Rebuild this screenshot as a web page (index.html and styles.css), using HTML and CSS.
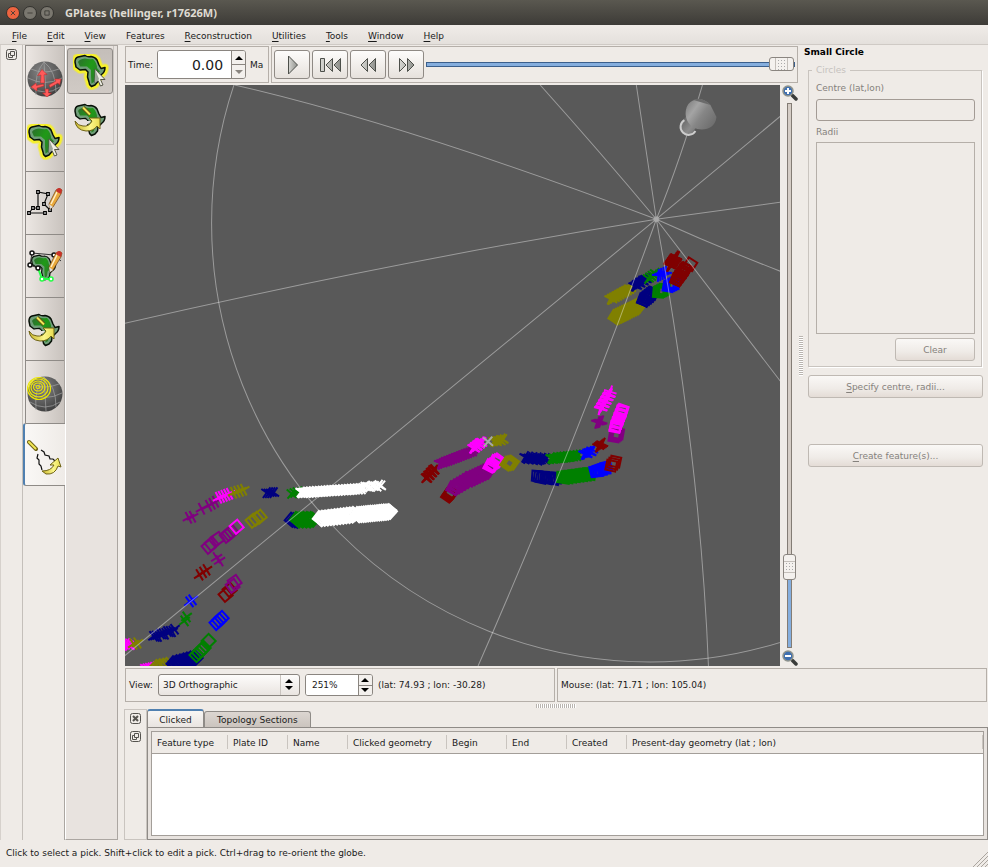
FILE: index.html
```html
<!DOCTYPE html>
<html lang="en">
<head>
<meta charset="utf-8">
<title>GPlates (hellinger, r17626M)</title>
<link rel="stylesheet" href="styles.css">
</head>
<body>
<svg class="defs" width="0" height="0" aria-hidden="true">
  <defs>
    <linearGradient id="leaf" x1="0" y1="0" x2="1" y2=".6"><stop offset="0" stop-color="#2c6e2e"/><stop offset=".55" stop-color="#1f9a17"/><stop offset="1" stop-color="#2c7a2c"/></linearGradient>
    <linearGradient id="gold" x1="0" y1="0" x2="1" y2="0"><stop offset="0" stop-color="#c9b52c"/><stop offset=".6" stop-color="#fbf68a"/><stop offset="1" stop-color="#e8dc50"/></linearGradient>
    <radialGradient id="ball" cx=".4" cy=".3" r=".75"><stop offset="0" stop-color="#858585"/><stop offset=".6" stop-color="#5c5c5c"/><stop offset="1" stop-color="#3c3c3c"/></radialGradient>
    <linearGradient id="arrowfill" x1="0" y1="0" x2="1" y2="0"><stop offset="0" stop-color="#d8d8d4"/><stop offset="1" stop-color="#8e908c"/></linearGradient>
    <linearGradient id="conefill" x1="0" y1="0" x2="1" y2=".7"><stop offset="0" stop-color="#777"/><stop offset=".35" stop-color="#a4a4a4"/><stop offset=".6" stop-color="#868686"/><stop offset="1" stop-color="#6e6e6e"/></linearGradient>
    <linearGradient id="stemfill" x1="0" y1="0" x2="1" y2="1"><stop offset="0" stop-color="#555"/><stop offset=".6" stop-color="#8c8c8c"/><stop offset="1" stop-color="#666"/></linearGradient>
    <path id="africa" d="M2 8Q2 4 5 3L12 1.500Q15 3.500 18 2.500Q22 3 24 6L26 11 28 14.500 32 13.500Q32 18 28.500 20.500L25 24 24.500 28 22 31 18.500 32.500Q16 31 16 28L14.500 23 15 18 12.500 15.500 7 16 3 13Z"/>
    <g id="land"><use href="#africa" fill="#6f9e78" stroke="#071007" stroke-width="1.500" stroke-linejoin="round"/><path d="M5 8Q6 5 12 4.500Q16 5.500 20 5Q24 9 24 14L27 17.500 22 22 21 28 18.500 29.500 18 22 18 16 14 12.500 7 12.500Z" fill="url(#leaf)"/></g>
    <g id="cursor"><path d="M22 15V29L25 26.500 27.500 32 30 31 27.500 25.500H32Z" fill="#efefe4" stroke="#555548" stroke-width="1"/><path d="M22 15V29L25 26.500 26 25Z" fill="#9ea79a"/></g>
    <g id="goldarrow"><path d="M2 18Q3 27 13 28Q21 28 24 23L27 26 27 15 16 15 19 18Q16 24 10 23Q5 23 2 18Z" fill="url(#gold)" stroke="#6e6214" stroke-width="1"/></g>
    <symbol id="i-pick" viewBox="0 0 36 36"><use href="#africa" fill="none" stroke="#f6f02c" stroke-opacity=".5" stroke-width="8" stroke-linejoin="round"/><use href="#africa" fill="none" stroke="#f6f02c" stroke-width="6" stroke-linejoin="round"/><use href="#land"/><use href="#cursor"/></symbol>
    <symbol id="i-rotate" viewBox="0 0 36 36"><use href="#land"/><path d="M10 4.500 17 11.500" stroke="#5f5714" stroke-width="4"/><path d="M10 4.500 17 11.500" stroke="#f2e756" stroke-width="2"/><path d="M6 17Q14 15 14 18L18 18Q15 23 9 22Z" fill="#e6e1dc"/><use href="#goldarrow"/></symbol>
    <symbol id="i-globe" viewBox="0 0 36 36"><circle cx="18" cy="18" r="17.500" fill="url(#ball)"/><g fill="none" stroke="#a3a3a3" stroke-width=".7"><path d="M17 1Q7 12 9 34M17 1Q18 18 19 35M17 1Q29 10 29 31M4 8Q17 14 32 8M1 17Q18 26 35 17M3 26Q18 36 33 26"/></g></symbol>
    <symbol id="i-drag" viewBox="0 0 36 36"><use href="#i-globe"/><g fill="#ff5a5a" stroke="#b22" stroke-width=".5"><path d="M13.500 22 14 14 10.500 14.500 15 8.500 20 13.500 17 13.800 17.500 22ZM17 25 10 27 10 30 4 26 9 22 9.500 24.500 16.500 23ZM22 24 29 20 27.500 18 34 18 32.500 24 31 22 23 26.500ZM18 28H21.500V32L24.500 32 20 36 15.500 32H18.500Z"/></g></symbol>
    <g id="pencil"><path d="M22 17 29 3Q33 0 35 3L34 7 26 20 23 22Z" fill="#e9a93c" stroke="#6b3f16" stroke-width=".7"/><path d="M24 17 30 5" stroke="#fff0c8" stroke-width="1.500"/><path d="M29 3Q32 -1 35 3L34 7 30 5Z" fill="#c9312b"/><path d="M22 17 23 22 26 20Z" fill="#ddd"/></g>
    <symbol id="i-digitise" viewBox="0 0 36 36"><path d="M2 26H18M2 26 6 21H11V5L21 7 17 17 23 23" fill="none" stroke="#111" stroke-width="1.200"/><g fill="#fff" stroke="#000" stroke-width="1.200"><path d="M.7 24.700h2.600v2.600h-2.600zM16.700 24.700h2.600v2.600h-2.600zM4.700 19.700h2.600v2.600h-2.600zM9.700 19.700h2.600v2.600h-2.600zM9.700 3.700h2.600v2.600h-2.600zM19.700 5.700h2.600v2.600h-2.600zM15.700 15.700h2.600v2.600h-2.600zM21.700 21.700h2.600v2.600h-2.600z"/></g><use href="#pencil"/></symbol>
    <symbol id="i-topo" viewBox="0 0 36 36"><g transform="translate(3 4) scale(.8)"><use href="#land"/></g><path d="M3 15 5 3 27 5 34 11M3 15 11 18" fill="none" stroke="#333"/><path d="M11 18 15 29H24" fill="none" stroke="#2f4" stroke-width="2"/><g fill="#fff" stroke="#111" stroke-width="1.500"><circle cx="5" cy="3" r="2"/><circle cx="27" cy="5" r="2"/><circle cx="3" cy="15" r="2"/><circle cx="11" cy="18" r="2"/></g><g fill="#fff" stroke="#2f4" stroke-width="1.500"><circle cx="15" cy="29" r="2"/><circle cx="24" cy="29" r="2"/></g><use href="#pencil"/></symbol>
    <symbol id="i-circles" viewBox="0 0 36 36"><use href="#i-globe"/><g fill="none" stroke="#ebe600" stroke-width="1.200"><ellipse cx="11" cy="11" rx="2" ry="1.500"/><ellipse cx="11" cy="11" rx="4.500" ry="4"/><ellipse cx="11" cy="11.500" rx="7" ry="6.500"/><ellipse cx="11.500" cy="12" rx="9.500" ry="9"/><ellipse cx="12" cy="12.500" rx="11.500" ry="11"/></g></symbol>
    <symbol id="i-hellinger" viewBox="0 0 36 36"><path d="M2 3 9 10" stroke="#6e6214" stroke-width="4" stroke-linecap="round"/><path d="M2 3 8.500 9.500" stroke="#f2e756" stroke-width="2" stroke-linecap="round"/><path d="M14 11 17 13 18 16 22 17 23 20 26 20 28 22M11 15 10 19 12 21 12 25 14 27 15 31" fill="none" stroke="#111" stroke-width="1.200"/><path d="M15 32Q24 32 27 26H23L31 19 34 28 31 27Q28 36 19 35Z" fill="url(#gold)" stroke="#6e6214"/></symbol>
    <symbol id="i-float" viewBox="0 0 11 11"><rect x=".5" y=".5" width="10" height="10" rx="2" fill="none" stroke="#55534f"/><path d="M4.500 2.500h4v4h-4zM6.500 6.500v2h-4v-4h2" fill="none" stroke="#55534f"/></symbol>
    <symbol id="i-close" viewBox="0 0 11 11"><rect x=".5" y=".5" width="10" height="10" rx="2" fill="none" stroke="#55534f"/><path d="M3 3 8 8M8 3 3 8" stroke="#55534f" stroke-width="2"/></symbol>
    <g id="lens"><path d="M10.500 10.500 14 14" stroke="#3a3c3a" stroke-width="3.500" stroke-linecap="round"/><circle cx="6" cy="6" r="5" fill="#3f6fb0" stroke="#8f938c" stroke-width="1.500"/></g>
    <symbol id="i-zoomin" viewBox="0 0 16 16"><use href="#lens"/><path d="M3 6H9M6 3V9" stroke="#fff" stroke-width="2"/></symbol>
    <symbol id="i-zoomout" viewBox="0 0 16 16"><use href="#lens"/><path d="M3 6H9" stroke="#fff" stroke-width="2"/></symbol>
  </defs>
</svg>

<header class="titlebar">
  <button class="wbtn wclose" aria-label="Close"><svg viewBox="0 0 14 14"><path d="M4.500 4.500 9.500 9.500M9.500 4.500 4.500 9.500"/></svg></button>
  <button class="wbtn" aria-label="Minimise"><svg viewBox="0 0 14 14"><path d="M4 7H10"/></svg></button>
  <button class="wbtn" aria-label="Maximise"><svg viewBox="0 0 14 14"><path d="M4.500 4.500h5v5h-5z"/></svg></button>
  <h1>GPlates (hellinger, r17626M)</h1>
</header>
<nav class="menubar">
  <a href="#"><u>F</u>ile</a><a href="#"><u>E</u>dit</a><a href="#"><u>V</u>iew</a><a href="#">Fe<u>a</u>tures</a><a href="#"><u>R</u>econstruction</a><a href="#"><u>U</u>tilities</a><a href="#"><u>T</u>ools</a><a href="#"><u>W</u>indow</a><a href="#"><u>H</u>elp</a>
</nav>

<div class="window">
  <aside class="side">
    <div class="gutter"><button class="dockbtn" aria-label="Float"><svg><use href="#i-float"/></svg></button></div>
    <div class="vtabs">
      <button class="vtab" aria-label="View"><svg><use href="#i-drag"/></svg></button>
      <button class="vtab" aria-label="Feature inspection"><svg><use href="#i-pick"/></svg></button>
      <button class="vtab" aria-label="Digitisation"><svg><use href="#i-digitise"/></svg></button>
      <button class="vtab" aria-label="Topology"><svg><use href="#i-topo"/></svg></button>
      <button class="vtab" aria-label="Pole manipulation"><svg><use href="#i-rotate"/></svg></button>
      <button class="vtab" aria-label="Small circle"><svg><use href="#i-circles"/></svg></button>
      <button class="vtab current" aria-label="Hellinger"><svg><use href="#i-hellinger"/></svg></button>
    </div>
    <div class="toolpage">
      <div class="toolset">
        <button class="tool pressed" aria-label="Select pick"><svg><use href="#i-pick"/></svg></button>
        <button class="tool" aria-label="Adjust pole"><svg><use href="#i-rotate"/></svg></button>
      </div>
    </div>
  </aside>

  <main class="content">
    <div class="upper">
      <div class="view">
        <div class="timebar">
          <div class="frame timebox">
            <label for="time">Time:</label>
            <span class="spin big"><input id="time" type="text" value="0.00"><span class="steps"><button aria-label="Increase time"><svg viewBox="0 0 8 4"><path d="M0 4 4 0 8 4Z"/></svg></button><button aria-label="Decrease time" disabled><svg viewBox="0 0 8 4"><path d="M0 0H8L4 4Z"/></svg></button></span></span>
            <span>Ma</span>
          </div>
          <div class="frame playbox">
            <button class="play" aria-label="Play"><svg viewBox="0 0 24 20"><path d="M8.500 1V19L17.500 10Z"/></svg></button>
            <button class="play" aria-label="Reset"><svg viewBox="0 0 24 20"><path d="M2.500 3.500h4v13h-4zM14.500 3.500V16.500L8 10ZM22.500 3.500V16.500L16 10Z"/></svg></button>
            <button class="play" aria-label="Step back"><svg viewBox="0 0 24 20"><path d="M11.500 3.500V16.500L5 10ZM19.500 3.500V16.500L13 10Z"/></svg></button>
            <button class="play" aria-label="Step forward"><svg viewBox="0 0 24 20"><path d="M5.500 3.500V16.500L12 10ZM13.500 3.500V16.500L20 10Z"/></svg></button>
            <input class="hslider" type="range" min="0" max="100" value="100" aria-label="Time slider">
          </div>
        </div>
        <div class="stage">
          <svg class="globe" viewBox="125 85 655 580" preserveAspectRatio="xMidYMid slice" role="img" aria-label="Globe">
            <g id="picks"></g>
            <g class="grid">
              <circle cx="650" cy="223" r="438"/>
              <path d="M235 85Q408 125 656 219M540 85Q600 152 656 219M636 85 656 219M702 85Q680 160 656 219M780 116 656 219M780 202 656 219M780 271Q718 247 656 219M780 381Q716 297 656 219M708 665Q700 462 656 219M478 665Q573 449 656 219M125 655 656 219M125 323Q399 260 656 219"/>
            </g>
            <circle cx="656" cy="219" r="3" fill="#b0b0b0" opacity=".6"/>
            <path d="M680 124 688 113 699 123 690 135 683 133Z" fill="url(#stemfill)"/>
            <path d="M684 120A8 8 0 1 0 695 131" fill="none" stroke="#ccc" stroke-width="2"/>
            <path d="M710 105C703 97 693 98 688 104C682 113 686 126 697 129C706 131 715 127 716 117Z" fill="url(#conefill)"/>
            <path d="M710 105C703 98 697 98 693 100Z" fill="#6a6a6a"/>
          </svg>
          <div class="zoomcol">
            <button class="zoombtn" aria-label="Zoom in"><svg><use href="#i-zoomin"/></svg></button>
            <input class="vslider" type="range" min="0" max="100" value="13" aria-label="Zoom">
            <button class="zoombtn" aria-label="Zoom out"><svg><use href="#i-zoomout"/></svg></button>
          </div>
        </div>
      </div>
      <div class="vgrip"></div>
      <section class="panel">
        <h2>Small Circle</h2>
        <fieldset disabled>
          <legend>Circles</legend>
          <label for="centre">Centre (lat,lon)</label>
          <input id="centre" class="field" type="text">
          <label for="radii">Radii</label>
          <textarea id="radii" class="list"></textarea>
          <button class="btn clear">Clear</button>
        </fieldset>
        <button class="btn" disabled><span><u>S</u>pecify centre, radii...</span></button>
        <button class="btn create" disabled><span><u>C</u>reate feature(s)...</span></button>
      </section>
    </div>

    <div class="viewbar">
      <div class="frame viewbox">
        <label for="projection">View:</label>
        <span class="combo"><select id="projection"><option>3D Orthographic</option></select><svg viewBox="0 0 8 11"><path d="M0 4 4 0 8 4ZM0 7H8L4 11Z"/></svg></span>
        <span class="spin"><input type="text" value="251%" aria-label="Zoom percent"><span class="steps"><button aria-label="Increase zoom"><svg viewBox="0 0 8 4"><path d="M0 4 4 0 8 4Z"/></svg></button><button aria-label="Decrease zoom"><svg viewBox="0 0 8 4"><path d="M0 0H8L4 4Z"/></svg></button></span></span>
        <span>(lat: 74.93 ; lon: -30.28)</span>
      </div>
      <div class="frame mousebox">Mouse: (lat: 71.71 ; lon: 105.04)</div>
    </div>
    <div class="hgrip"></div>
    <section class="dock">
      <div class="dockside">
        <button class="dockbtn" aria-label="Close"><svg><use href="#i-close"/></svg></button>
        <button class="dockbtn" aria-label="Float"><svg><use href="#i-float"/></svg></button>
      </div>
      <div class="tabbox">
        <div class="tabs"><button class="tab current">Clicked</button><button class="tab">Topology Sections</button></div>
        <div class="tabpage">
          <div class="tableframe">
            <table>
              <thead><tr><th class="c1">Feature type</th><th class="c2">Plate ID</th><th class="c2">Name</th><th class="c3">Clicked geometry</th><th class="c2">Begin</th><th class="c2">End</th><th class="c2">Created</th><th>Present-day geometry (lat ; lon)</th></tr></thead>
            </table>
          </div>
        </div>
      </div>
    </section>
  </main>
</div>
<footer class="status"><span>Click to select a pick. Shift+click to edit a pick. Ctrl+drag to re-orient the globe.</span><svg viewBox="0 0 16 16"><path d="M1 16 16 1M5 16 16 5M9 16 16 9M13 16 16 13"/></svg></footer>
<script src="picks.js"></script>
</body>
</html>
```
FILE: picks.js
```js
// Each row: shape, colour, first pick, last pick, number of picks, rotation.
const DR = "#800000", PU = "#800080", MG = "#ff00ff", OL = "#808000",
      NV = "#000080", GR = "#008000", BL = "#0000ff", WH = "#ffffff", GY = "#a8a8a8";
const rows = [
  // western segment
  ["x", PU, 189, 517, 193, 516, 2, -28], ["x", PU, 202, 508, 202, 508, 1, -28],
  ["x", PU, 209, 505, 216, 501, 3, -28], ["x", MG, 219, 497, 230, 493, 5, -28],
  ["x", OL, 234, 492, 244, 489, 4, -28], ["x", NV, 267, 492, 274, 492, 4, 35],
  ["x", GR, 292, 493, 298, 491, 3, 40], ["x", WH, 301, 492, 362, 488, 64, 40],
  ["x", WH, 366, 486, 381, 485, 8, 40],
  ["s", PU, 209, 546, 212, 543, 2, 50], ["s", PU, 218, 538, 218, 538, 1, 55],
  ["s", PU, 227, 535, 232, 531, 3, 50], ["s", MG, 237, 526, 237, 526, 1, 50],
  ["s", OL, 253, 520, 260, 516, 3, 50], ["s", NV, 292, 519, 297, 520, 3, 40],
  ["s", GR, 297, 519, 313, 519, 14, 42], ["s", WH, 320, 518, 354, 514, 34, 42],
  ["s", WH, 358, 514, 390, 511, 44, 42],
  ["x", PU, 217, 557, 220, 560, 2, -32], ["x", DR, 200, 574, 207, 569, 3, -32],
  ["x", BL, 190, 601, 193, 599, 2, -36], ["x", GR, 185, 620, 187, 616, 2, -36],
  ["x", NV, 154, 636, 175, 629, 10, -34], ["x", MG, 122, 643, 130, 644, 6, 35],
  ["x", OL, 134, 643, 138, 642, 2, -34], ["x", MG, 146, 667, 151, 666, 3, 35],
  ["s", DR, 226, 594, 230, 589, 2, 50], ["s", PU, 233, 585, 235, 581, 2, 55],
  ["s", BL, 217, 622, 222, 617, 3, 48], ["s", OL, 157, 666, 167, 664, 4, 45],
  ["s", NV, 174, 663, 196, 657, 20, 45], ["s", GR, 197, 654, 204, 647, 4, 45],
  ["s", GR, 209, 640, 209, 640, 1, 45],
  // middle segment
  ["x", DR, 426, 478, 435, 468, 12, 45], ["x", PU, 440, 463, 472, 451, 40, 25],
  ["x", MG, 473, 448, 482, 441, 12, 35], ["x", OL, 494, 441, 503, 439, 8, 35],
  ["x", GY, 488, 441, 488, 441, 1, 40],
  ["s", DR, 448, 495, 452, 491, 5, 35], ["s", PU, 453, 488, 468, 479, 16, 32],
  ["s", PU, 469, 479, 488, 470, 22, 32], ["s", MG, 490, 466, 498, 459, 6, 32],
  ["s", OL, 507, 463, 512, 462, 4, 35],
  ["x", NV, 525, 457, 546, 459, 16, 35], ["x", GR, 551, 458, 578, 455, 26, 35],
  ["x", BL, 584, 454, 592, 450, 7, 30], ["x", DR, 598, 446, 602, 443, 4, 25],
  ["s", NV, 537, 476, 556, 478, 10, 8], ["s", GR, 562, 477, 590, 473, 24, 5],
  ["s", BL, 595, 471, 606, 467, 10, -10], ["s", DR, 611, 465, 615, 461, 3, 12],
  ["x", PU, 597, 422, 601, 421, 4, 20], ["x", MG, 600, 409, 610, 392, 16, 20],
  ["s", PU, 614, 436, 618, 433, 4, 10], ["s", MG, 615, 427, 622, 409, 15, 15],
  // northern segment
  ["x", OL, 610, 299, 630, 288, 26, 30], ["x", NV, 634, 286, 646, 278, 12, 30],
  ["x", GR, 648, 278, 655, 273, 4, 35], ["x", BL, 658, 275, 665, 272, 4, 5],
  ["x", DR, 669, 266, 676, 256, 18, 25],
  ["s", OL, 615, 317, 638, 306, 34, 35], ["s", NV, 643, 300, 652, 293, 14, 25],
  ["s", GR, 658, 292, 664, 289, 5, 5], ["s", BL, 668, 286, 674, 283, 4, 10],
  ["s", DR, 676, 280, 685, 268, 18, 25], ["s", DR, 690, 264, 690, 264, 1, 32]
];
const shapes = { s: "M-5-5H5V5H-5Z", x: "M-6.5 0H6.5M0-6.5V6.5" };
const layer = document.getElementById("picks");
for (const [kind, colour, x0, y0, x1, y1, n, turn] of rows) {
  for (let i = 0; i < n; i++) {
    const t = n > 1 ? i / (n - 1) : 0;
    const wobble = n > 5 ? (i % 3) - 1 : 0;
    const mark = document.createElementNS("http://www.w3.org/2000/svg", "path");
    mark.setAttribute("d", shapes[kind]);
    mark.setAttribute("stroke", colour);
    mark.setAttribute("transform", `translate(${x0 + (x1 - x0) * t} ${y0 + (y1 - y0) * t + wobble * 0.7}) rotate(${turn + wobble * 4})`);
    layer.append(mark);
  }
}
```
FILE: styles.css
```css
* { box-sizing: border-box; }
body {
  margin: 0;
  min-height: 100vh;
  display: flex;
  flex-direction: column;
  background: #efebe7;
  color: #1a1a1a;
  font: 9px/12px "DejaVu Sans", sans-serif;
}
button, input, select, textarea { font: inherit; color: inherit; margin: 0; }
button { padding: 0; border: 0; background: none; }
svg { display: block; }
.defs { position: absolute; }
u { text-decoration: underline; text-underline-offset: 2px; }

.titlebar {
  display: flex;
  align-items: center;
  gap: 3px;
  height: 25px;
  padding-left: 6px;
  background: linear-gradient(#5a5850, #3d3b37);
}
.titlebar h1 {
  margin: 0 0 0 8px;
  font: bold 11px/16px "Noto Sans", sans-serif;
  color: #dfdbd2;
}
.wbtn {
  width: 14px;
  height: 14px;
  border-radius: 50%;
  background: #7a776f;
  border: 1px solid #33322e;
}
.wbtn svg { fill: none; stroke: #3a3935; stroke-width: 1; }
.wclose { background: #ee6440; }

.menubar {
  display: flex;
  gap: 20px;
  height: 20px;
  padding: 5px 12px 0;
  background: linear-gradient(#f0ece8, #e4e0dc);
  border-bottom: 1px solid #cfcac5;
}
.menubar a { color: inherit; text-decoration: none; }

.window { flex: 1; display: flex; }
.side { display: flex; width: 118px; }
.gutter {
  width: 23px;
  padding: 4px 0 0 5px;
  border-left: 1px solid #d6d1cc;
  border-right: 1px solid #c4bfba;
}
.dockbtn { display: block; width: 11px; height: 11px; }
.dockbtn svg { width: 11px; height: 11px; }
.vtabs { width: 42px; display: flex; flex-direction: column; border-right: 1px solid #aba6a1; }
.vtab {
  height: 63px;
  margin: 0 0 0 2px;
  padding: 4px 0 0 1px;
  border: 1px solid #8f8b87;
  border-width: 1px 0 0 1px;
  background: linear-gradient(90deg, #ece7e3, #c9c3be);
}
.vtab svg { width: 36px; height: 36px; }
.vtab.current {
  margin: 0 -1px 0 0;
  padding-left: 2px;
  border-left: 2px solid #5080b0;
  border-bottom: 1px solid #8f8b87;
  border-radius: 3px 0 0 3px;
  background: linear-gradient(90deg, #faf8f6, #efebe7);
}
.toolpage { width: 53px; background: #e8e3df; border: 1px solid #aba6a1; border-left: 1px solid #fff; }
.toolset { width: 48px; height: 99px; padding: 2px 0 0 1px; border: 1px solid #c9c4bf; border-width: 0 1px 1px 0; }
.tool { display: grid; place-items: center; width: 46px; height: 46px; padding: 2px 0 0 2px; border: 1px solid transparent; border-radius: 3px; }
.tool svg { width: 36px; height: 36px; }
.tool.pressed { background: linear-gradient(#c4beb9, #d0cac5); border-color: #8f8b87; }
.tool + .tool { height: 52px; }

.content { flex: 1; min-width: 0; display: flex; flex-direction: column; padding-left: 6px; }
.upper { flex: 1; display: flex; }
.view { flex: 1; min-width: 0; display: flex; flex-direction: column; padding: 1px 0 0 1px; }
.frame { border: 1px solid #b5afa9; display: flex; align-items: center; }
.timebar { display: flex; gap: 2px; height: 39px; padding-bottom: 2px; }
.timebox { width: 144px; gap: 4px; padding-left: 2px; }
.playbox { flex: 1; gap: 2px; padding: 0 2px 0 2px; }
.spin {
  display: flex;
  height: 22px;
  border: 1px solid #8a8580;
  border-radius: 3px;
  background: #fff;
  overflow: hidden;
}
.spin input { width: 52px; min-width: 0; border: 0; padding: 0 0 0 6px; background: #fff; outline: 0; }
.spin.big { height: 29px; }
.spin.big input { width: 73px; padding: 0 8px 0 0; font-size: 14px; text-align: right; }
.steps { display: flex; flex-direction: column; width: 14px; border-left: 1px solid #8a8580; background: #f3f0ed; }
.steps button { flex: 1; display: grid; place-items: center; }
.steps button + button { border-top: 1px solid #8a8580; }
.steps svg { width: 8px; height: 4px; fill: #000; }
.steps button:disabled svg { fill: #8a8580; }
.play {
  display: grid;
  place-items: center;
  width: 36px;
  height: 29px;
  border: 1px solid #8f8a85;
  border-radius: 3px;
  background: linear-gradient(#fdfcfb, #e6e1dc);
}
.play svg { width: 24px; height: 20px; fill: url(#arrowfill); stroke: #4c4f4a; stroke-width: 1; }

.hslider { flex: 1; min-width: 0; height: 16px; appearance: none; background: none; }
.hslider::-webkit-slider-runnable-track { height: 5px; background: #85aede; border: 1px solid #3b5f8c; }
.hslider::-webkit-slider-thumb {
  appearance: none;
  width: 25px;
  height: 14px;
  margin-top: -6px;
  border: 1px solid #8a8580;
  border-radius: 3px;
  background:
    linear-gradient(90deg, #f4f1ee 5px, #c4bfba 5px, #c4bfba 6px, transparent 6px, transparent 17px, #c4bfba 17px, #c4bfba 18px, #f4f1ee 18px),
    repeating-linear-gradient(#f4f1ee 0 2px, transparent 2px 3px),
    repeating-linear-gradient(90deg, #f4f1ee 0 2px, #aaa 2px 3px);
}
.stage { flex: 1; display: flex; }
.globe { flex: 1; min-width: 0; width: 0; min-height: 0; background: #595959; }
#picks path { fill: none; stroke-width: 2; }
.grid { fill: none; stroke: #fff; stroke-opacity: .4; stroke-width: 1; }
.zoomcol { width: 18px; padding-left: 1px; display: flex; flex-direction: column; align-items: center; gap: 2px; }
.zoombtn, .zoombtn svg { width: 16px; height: 16px; }
.vslider { flex: 1; width: 13px; writing-mode: vertical-lr; direction: rtl; appearance: none; background: none; }
.vslider::-webkit-slider-runnable-track {
  width: 5px;
  border: 1px solid #837c75;
  background: linear-gradient(#d5cdc6 86%, #85aede 86%);
}
.vslider::-webkit-slider-thumb {
  appearance: none;
  width: 13px;
  height: 26px;
  margin-left: -5px;
  border: 1px solid #8a8580;
  border-radius: 3px;
  background:
    linear-gradient(#f4f1ee 6px, #c4bfba 6px, #c4bfba 7px, transparent 7px, transparent 17px, #c4bfba 17px, #c4bfba 18px, #f4f1ee 18px),
    repeating-linear-gradient(#f4f1ee 0 2px, transparent 2px 3px),
    repeating-linear-gradient(90deg, #f4f1ee 0 2px, #aaa 2px 3px);
}

.vgrip {
  width: 4px;
  height: 40px;
  margin: 0 1px;
  align-self: center;
  background: repeating-linear-gradient(#b9b4af 0 1px, #fff 1px 2px);
}
.panel { width: 184px; padding: 1px 5px 0 4px; display: flex; flex-direction: column; color: #85817c; }
.panel h2 { margin: 0 0 7px -4px; font-size: 9px; line-height: 12px; color: #000; }
.panel fieldset {
  margin: 0 1px 8px 0;
  padding: 7px 6px 5px 7px;
  min-width: 0;
  border: 1px solid #c9c4bf;
  box-shadow: 1px 1px #fff;
  display: flex;
  flex-direction: column;
}
.panel legend { padding: 0 4px; margin-left: -4px; color: #c6c2be; line-height: 10px; }
.field { height: 22px; margin: 5px 0; border: 1px solid #a39b95; border-radius: 3px; background: #efebe7; }
.list { height: 192px; margin: 4px 0; border: 1px solid #b5afa9; background: #efebe7; resize: none; }
.btn {
  height: 23px;
  border: 1px solid #bfb9b3;
  border-radius: 3px;
  color: #85817c;
  background: linear-gradient(#faf8f6, #efebe7 60%, #e4dcd6);
}
.clear { width: 80px; align-self: flex-end; }
.create { margin-top: 46px; }

.viewbar { display: flex; gap: 2px; height: 34px; margin: 2px 1px 0; }
.viewbox { width: 430px; gap: 5px; padding-left: 3px; }
.mousebox { flex: 1; padding-left: 3px; }
.combo { position: relative; height: 22px; }
.combo select {
  appearance: none;
  width: 142px;
  height: 22px;
  padding: 0 24px 0 4px;
  border: 1px solid #8a8580;
  border-radius: 3px;
  background: linear-gradient(90deg, transparent 121px, #c9c4bf 121px, #c9c4bf 122px, transparent 122px), linear-gradient(#fdfcfb, #e9e4e0);
}
.combo svg { position: absolute; right: 7px; top: 5px; width: 8px; height: 11px; pointer-events: none; }
.hgrip {
  width: 40px;
  height: 4px;
  margin: 2px auto 1px;
  background: repeating-linear-gradient(90deg, #b9b4af 0 1px, #fff 1px 2px);
}
.dock { display: flex; height: 131px; }
.dockside {
  width: 23px;
  padding: 3px 0 0 5px;
  border: 1px solid #c9c4bf;
  display: flex;
  flex-direction: column;
  gap: 7px;
}
.tabbox { flex: 1; min-width: 0; display: flex; flex-direction: column; }
.tabs { display: flex; height: 18px; align-items: flex-end; }
.tab {
  height: 16px;
  padding: 0 12px;
  border: 1px solid #8f8b87;
  border-bottom: 0;
  border-radius: 3px 3px 0 0;
  background: linear-gradient(#dcd6d1, #cbc4be);
}
.tab.current { width: 57px; height: 19px; margin-bottom: -1px; padding: 0; border-top: 2px solid #5080b0; background: linear-gradient(#f8f6f4, #e8e3df); }
.tabpage { flex: 1; display: flex; padding: 3px; border: 1px solid #8f8b87; background: #e8e3df; }
.tableframe { flex: 1; border: 1px solid #a39e99; background: #fff; }
table { width: 100%; border-collapse: collapse; table-layout: fixed; }
th {
  height: 21px;
  padding: 1px 0 0 5px;
  text-align: left;
  font-weight: normal;
  white-space: nowrap;
  border-bottom: 1px solid #a39e99;
  background: linear-gradient(#c9c4bf, #c9c4bf) right 50% / 1px 14px no-repeat, #efebe7;
}
.c1 { width: 76px; }
.c2 { width: 60px; }
.c3 { width: 99px; }

.status { display: flex; justify-content: space-between; height: 27px; padding-left: 6px; }
.status span { padding-top: 7px; }
.status svg { width: 16px; height: 16px; align-self: flex-end; stroke: #aaa59f; stroke-width: 1; }
```
